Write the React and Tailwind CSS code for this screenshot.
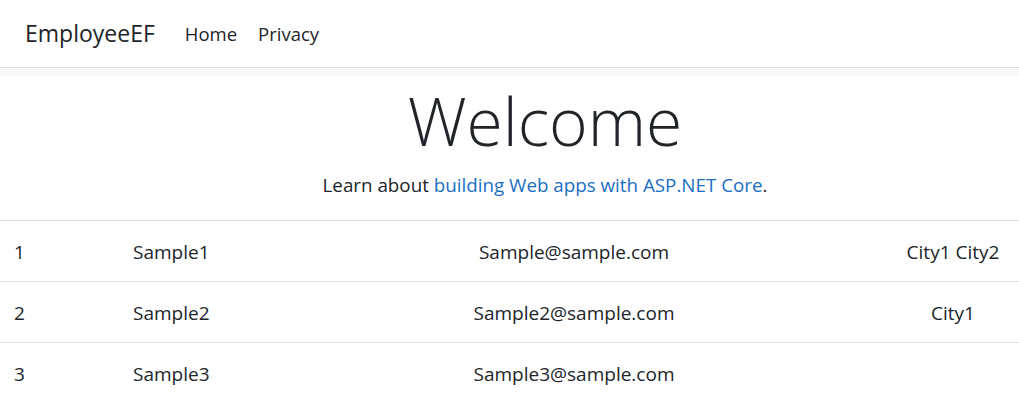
import React from 'react';

const rows = [
  { id: 1, name: 'Sample1', email: 'Sample@sample.com', cities: 'City1 City2' },
  { id: 2, name: 'Sample2', email: 'Sample2@sample.com', cities: 'City1' },
  { id: 3, name: 'Sample3', email: 'Sample3@sample.com', cities: '' },
];

function NavBar() {
  return (
    <header>
      <nav className="flex h-[68px] items-center border-b border-[#dde1e6] bg-white pl-[25px]">
        <a className="text-[23px] text-[#212529]">EmployeeEF</a>
        <div className="ml-[30px] flex gap-[21px] text-[18.5px] text-[#212529]">
          <a>Home</a>
          <a>Privacy</a>
        </div>
      </nav>
      <div className="h-[8px] bg-[#f8f9f8]" />
    </header>
  );
}

function EmployeeTable() {
  return (
    <div className="text-[19px] text-[#212529]">
      {rows.map((row) => (
        <div
          key={row.id}
          className="grid h-[61px] grid-cols-[119px_200px_510px_190px] items-center border-t border-[#dee2e6] pt-[2px]"
        >
          <div className="pl-[14px]">{row.id}</div>
          <div className="pl-[14px]">{row.name}</div>
          <div className="text-center">{row.email}</div>
          <div className="pl-[58px] text-center">{row.cities}</div>
        </div>
      ))}
    </div>
  );
}

export default function App() {
  return (
    <div className="min-h-[401px] bg-white" style={{ fontFamily: '"Open Sans", "Noto Sans", sans-serif' }}>
      <NavBar />
      <main>
        <div className="pl-[71px] pt-[5px] text-center">
          <h1 className="text-[66px] font-light leading-[1.2] text-[#212529]">Welcome</h1>
          <p className="mt-[11px] text-[18.8px] text-[#212529]">
            Learn about{' '}
            <a className="text-[#1b6ec2]">building Web apps with ASP.NET Core</a>.
          </p>
        </div>
        <div className="mt-[21px]">
          <EmployeeTable />
        </div>
      </main>
    </div>
  );
}
